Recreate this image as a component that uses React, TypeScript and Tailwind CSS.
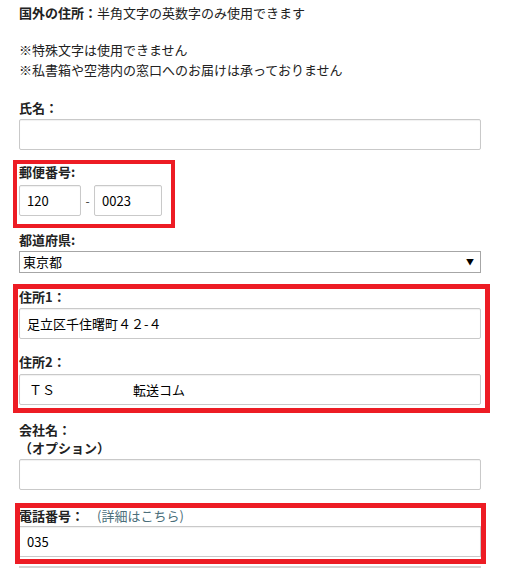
import React from "react";

const font = { fontFamily: '"Noto Sans CJK JP", "Liberation Sans", sans-serif' };

const Label = ({ children }: { children: React.ReactNode }) => (
  <div className="text-[13px] leading-[20px] font-bold text-[#222]">{children}</div>
);

const Box = ({ children, className = "" }: { children?: React.ReactNode; className?: string }) => (
  <div
    className={`h-[31px] border border-[#c9c9c9] rounded-[2px] bg-white shadow-[inset_0_1px_1px_rgba(0,0,0,0.06)] flex items-center px-[7px] text-[13px] text-black ${className}`}
  >
    {children}
  </div>
);

// red annotation frames drawn over the form
const Marker = ({ className }: { className: string }) => (
  <div className={`absolute border-[#ed1c24] pointer-events-none ${className}`} />
);

export default function App() {
  return (
    <div className="w-[515px] h-[572px] bg-white overflow-hidden pl-[19px] pt-[3px]" style={font}>
      <div className="w-[462px]">
        <div className="text-[13px] leading-[20px] text-[#222]">
          <span className="font-bold">国外の住所：</span>半角文字の英数字のみ使用できます
        </div>
        <div className="mt-[17px] text-[13px] leading-[20px] text-[#222]">
          <div>※特殊文字は使用できません</div>
          <div>※私書箱や空港内の窓口へのお届けは承っておりません</div>
        </div>

        <div className="mt-[18px]">
          <Label>氏名：</Label>
          <Box className="mt-[1px]" />
        </div>

        <div className="relative mt-[12px]">
          <Marker className="left-[-6px] top-[-2px] w-[162px] h-[68px] border-4" />
          <Label>郵便番号:</Label>
          <div className="mt-[3px] flex items-center">
            <Box className="w-[62px]">120</Box>
            <span className="w-[13px] text-center text-[12px] text-[#333]">-</span>
            <Box className="w-[68px]">0023</Box>
          </div>
        </div>

        <div className="mt-[14px]">
          <Label>都道府県:</Label>
          <div className="mt-[1px] h-[22px] border border-[#a6a6a6] bg-white flex items-center justify-between pl-[3px] pr-[6px] text-[13px] text-black">
            <span>東京都</span>
            <span className="text-[8px] leading-none">▼</span>
          </div>
        </div>

        <div className="relative mt-[14px]">
          <Marker className="left-[-6px] top-[-3px] w-[477px] h-[129px] border-[5px]" />
          <Label>住所1：</Label>
          <Box className="mt-[1px]">足立区千住曙町４２-４</Box>
          <div className="mt-[13px]">
            <Label>住所2：</Label>
            <Box className="mt-[2px] pl-[9px]">
              <span>ＴＳ</span>
              <span className="ml-[78px]">転送コム</span>
            </Box>
          </div>
        </div>

        <div className="mt-[16px]">
          <div className="text-[13px] leading-[18px] font-bold text-[#222]">
            <div>会社名：</div>
            <div>（オプション）</div>
          </div>
          <Box className="mt-[2px]" />
        </div>

        <div className="relative mt-[16px]">
          <Marker className="left-[-4px] top-[-3px] w-[471px] h-[61px] border-[5px]" />
          <div className="flex items-center text-[13px] leading-[20px]">
            <span className="font-bold text-[#222]">電話番号：</span>
            <span className="ml-[13px] text-[#4b6e7a]">(詳細はこちら)</span>
          </div>
          <Box className="rounded-none">035</Box>
        </div>

        <div className="mt-[9px] border-t-2 border-[#d4d4d4]" />
      </div>
    </div>
  );
}
